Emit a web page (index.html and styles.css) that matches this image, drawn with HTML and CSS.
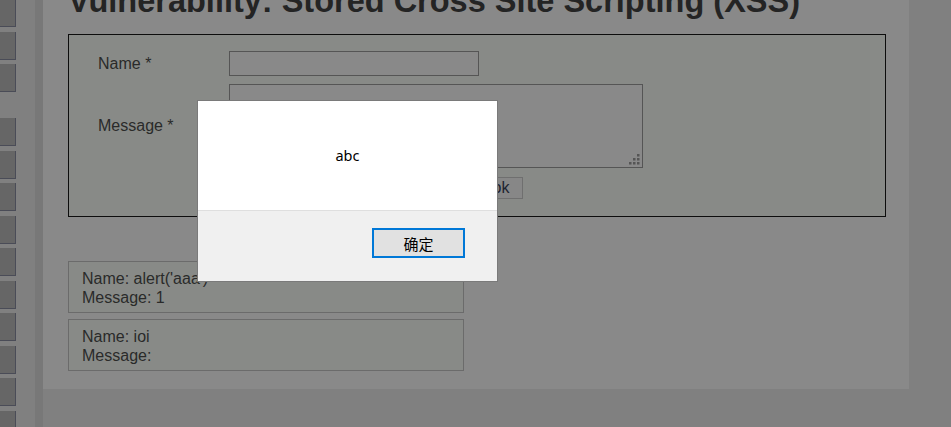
FILE: index.html
```html
<!DOCTYPE html>
<html lang="en">
<head>
<meta charset="utf-8">
<title>Stored XSS</title>
<link rel="stylesheet" href="styles.css">
</head>
<body>
<div class="page">
  <nav class="side">
    <span class="key first"></span>
    <span class="key"></span>
    <span class="key"></span>
    <span class="key sep"></span>
    <span class="key"></span>
    <span class="key"></span>
    <span class="key"></span>
    <span class="key"></span>
    <span class="key"></span>
    <span class="key"></span>
    <span class="key"></span>
    <span class="key"></span>
    <span class="key"></span>
  </nav>
  <div class="strip"></div>
  <main class="content">
    <h1 class="title">Vulnerability: Stored Cross Site Scripting (XSS)</h1>
    <form class="guest">
      <label class="lbl">Name *</label>
      <div class="field"><input class="name-in" type="text"></div>
      <label class="lbl">Message *</label>
      <div class="field ta-wrap">
        <textarea class="msg-in"></textarea>
        <svg class="grip" width="12" height="11" viewBox="0 0 12 11"><rect x="9" y="0" width="2.5" height="2.5" fill="#555"/><rect x="5" y="4" width="2.5" height="2.5" fill="#555"/><rect x="9" y="4" width="2.5" height="2.5" fill="#555"/><rect x="1" y="8" width="2.5" height="2.5" fill="#555"/><rect x="5" y="8" width="2.5" height="2.5" fill="#555"/><rect x="9" y="8" width="2.5" height="2.5" fill="#555"/></svg>
      </div>
      <span></span>
      <div class="field btns">
        <button class="btn" type="button">Sign Guestbook</button>
        <button class="btn" type="button">Clear Guestbook</button>
      </div>
    </form>
    <div class="comments">
      <div class="comment">Name: alert('aaa')<br>Message: 1</div>
      <div class="comment">Name: ioi<br>Message: </div>
    </div>
  </main>
</div>

<div class="dialog" role="alertdialog">
  <div class="dlg-body">abc</div>
  <div class="dlg-foot"><button class="dlg-ok" type="button">确定</button></div>
</div>
</body>
</html>
```

FILE: styles.css
```css
html, body {
  margin: 0;
  padding: 0;
}
body {
  background: #808080;
  font-family: "Liberation Sans", Arial, sans-serif;
  font-size: 16px;
  color: #2a2a2a;
  width: 951px;
  height: 427px;
  overflow: hidden;
}
.page {
  display: flex;
  height: 427px;
}
.side {
  width: 35px;
  flex: none;
  display: flex;
  flex-direction: column;
  gap: 4.5px;
  margin-top: -1px;
}
.key {
  display: block;
  width: 15px;
  height: 27px;
  flex: none;
  background: #666666;
  border-right: 1px solid #4a4c57;
  border-bottom: 1px solid #4a4c57;
}
.key.sep {
  margin-top: 21.5px;
}
.strip {
  width: 8px;
  flex: none;
  background: #787878;
}
.content {
  width: 866px;
  height: 389px;
  flex: none;
  background: #898989;
  padding: 0 0 0 25px;
  box-sizing: border-box;
}
.title {
  font-size: 32.5px;
  font-weight: bold;
  color: #242424;
  margin: -17px 0 0 0;
  line-height: normal;
  white-space: nowrap;
}
.guest {
  margin: 14px 0 0 0;
  width: 818px;
  height: 183px;
  box-sizing: border-box;
  border: 1px solid #0d0d0d;
  background: #888a87;
  padding: 16px 0 0 29px;
  display: grid;
  grid-template-columns: 131px 1fr;
  grid-template-rows: 25px 84px 22px;
  row-gap: 8px;
  align-items: center;
}
.guest > :nth-child(n+5) {
  margin-top: 1px;
}
.lbl {
  color: #2a2a2a;
}
.field {
  display: flex;
}
.name-in {
  width: 250px;
  height: 25px;
  box-sizing: border-box;
  border: 1px solid #555;
  background: #898989;
  margin: 0;
  padding: 0;
}
.ta-wrap {
  position: relative;
  width: 414px;
}
.msg-in {
  width: 414px;
  height: 84px;
  box-sizing: border-box;
  border: 1px solid #555;
  background: #898989;
  margin: 0;
  padding: 0;
  resize: none;
}
.grip {
  position: absolute;
  right: 3px;
  bottom: 3px;
}
.btns {
  gap: 4px;
}
.btn {
  font-family: "Liberation Sans", Arial, sans-serif;
  font-size: 16px;
  color: #1e2430;
  height: 22px;
  padding: 0 12.5px 0 13.5px;
  margin: 0;
  background: #878787;
  border: 1px solid #6f6f6f;
  border-radius: 0;
  line-height: 20px;
}
.comments {
  margin-top: 44px;
  display: flex;
  flex-direction: column;
  gap: 6px;
}
.comment {
  width: 396px;
  height: 52px;
  box-sizing: border-box;
  border: 1px solid #6b6b6b;
  background: #888a87;
  padding: 7px 13px 5px 13px;
  line-height: 19px;
  color: #2a2a2a;
}
.dialog {
  position: absolute;
  left: 197px;
  top: 100px;
  width: 301px;
  height: 182px;
  box-sizing: border-box;
  border: 1px solid #7a7a7a;
  background: #f0f0f0;
  display: flex;
  flex-direction: column;
}
.dlg-body {
  height: 110px;
  flex: none;
  background: #ffffff;
  border-bottom: 1px solid #dfdfdf;
  box-sizing: border-box;
  display: flex;
  justify-content: center;
  padding-top: 44px;
  font-family: "Noto Sans", "Noto Sans CJK SC", sans-serif;
  font-size: 14.5px;
  line-height: 20px;
  color: #000;
}
.dlg-foot {
  flex: 1;
  display: flex;
  justify-content: flex-end;
  align-items: flex-start;
  padding: 17px 32px 0 0;
}
.dlg-ok {
  width: 93px;
  height: 30px;
  box-sizing: border-box;
  border: 2px solid #0078d7;
  background: #e1e1e1;
  border-radius: 0;
  margin: 0;
  padding: 0;
  font-family: "Noto Sans CJK SC", sans-serif;
  font-size: 15px;
  color: #000;
}
```
